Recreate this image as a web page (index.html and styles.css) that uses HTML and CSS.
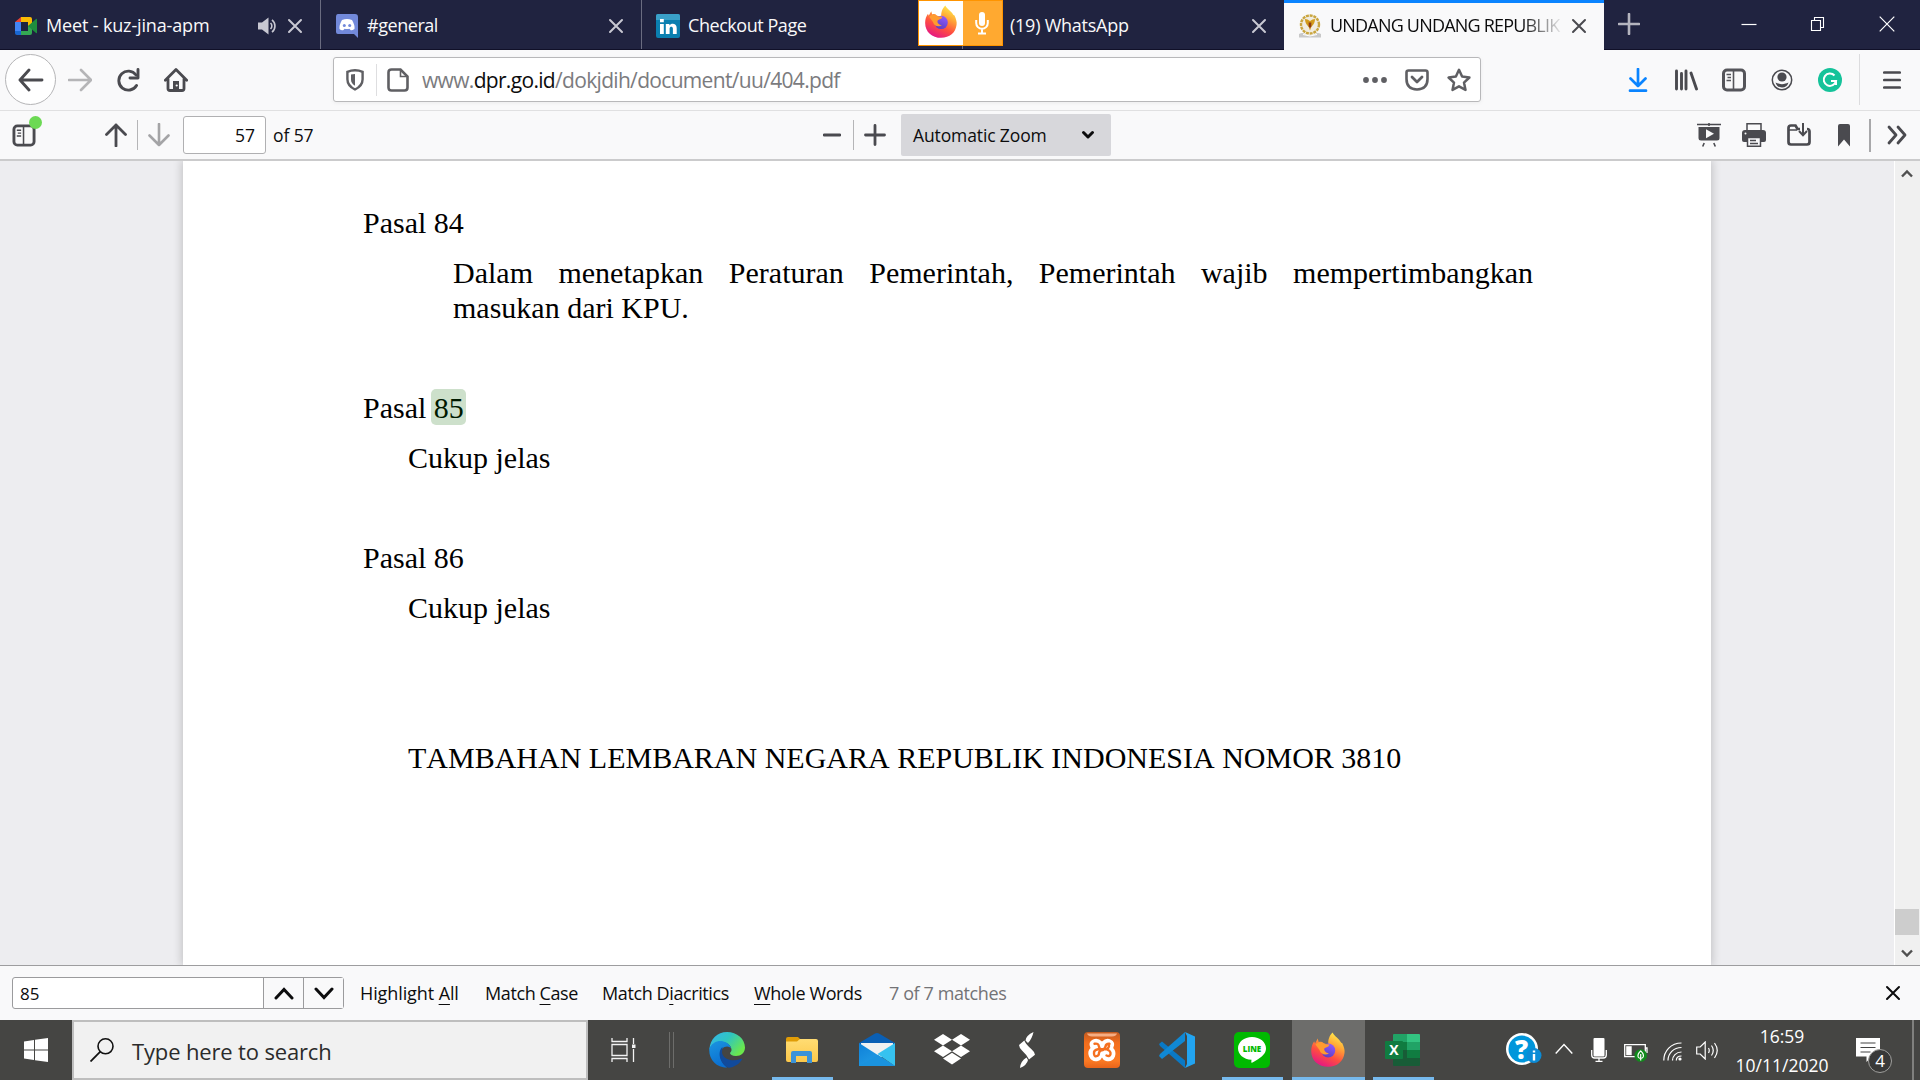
FILE: index.html
```html
<!DOCTYPE html>
<html lang="id">
<head>
<meta charset="utf-8">
<title>UNDANG UNDANG REPUBLIK INDONESIA</title>
<link rel="stylesheet" href="styles.css">
</head>
<body>
<svg width="0" height="0" class="defs">
  <defs>
    <linearGradient id="flame" x1="0.8" y1="0" x2="0.3" y2="1"><stop offset="0" stop-color="#fff44f"/><stop offset="0.35" stop-color="#ffa436"/><stop offset="0.65" stop-color="#ff4f3f"/><stop offset="1" stop-color="#e31587"/></linearGradient>
    <linearGradient id="globe" x1="0.7" y1="0" x2="0.3" y2="1"><stop offset="0" stop-color="#9059ff"/><stop offset="1" stop-color="#5b3fc0"/></linearGradient>
    <linearGradient id="edgeTop" x1="0" y1="0" x2="1" y2="0.6"><stop offset="0" stop-color="#35b4f0"/><stop offset="0.5" stop-color="#2fc5c0"/><stop offset="1" stop-color="#6be84c"/></linearGradient>
    <linearGradient id="edgeBody" x1="0" y1="0" x2="0.4" y2="1"><stop offset="0" stop-color="#1b95e0"/><stop offset="1" stop-color="#0a6ed1"/></linearGradient>
    <linearGradient id="xamppBg" x1="0" y1="0" x2="0" y2="1"><stop offset="0" stop-color="#c05a20"/><stop offset="0.3" stop-color="#f36d1c"/><stop offset="0.8" stop-color="#fb7a24"/><stop offset="1" stop-color="#e8641a"/></linearGradient>
    <linearGradient id="mailBody" x1="0" y1="0" x2="1" y2="1"><stop offset="0" stop-color="#0f80d8"/><stop offset="1" stop-color="#28a8ea"/></linearGradient>
    <linearGradient id="folder" x1="0" y1="0" x2="0" y2="1"><stop offset="0" stop-color="#ffdc73"/><stop offset="1" stop-color="#fcc84a"/></linearGradient>
    <symbol id="close" viewBox="0 0 16 16"><path d="M2 2l12 12M14 2L2 14" fill="none" stroke="currentColor" stroke-width="2" stroke-linecap="round"/></symbol>
    <symbol id="firefox" viewBox="0 0 36 36">
      <path d="M22.500 .500c1 2.600 4.500 4.600 6.800 7.500 1.500 1.800 1.300 2.600 3 3.200C34 15 35 18 34.500 21 33.500 29.500 27 34.800 18.200 34.800 8.500 34.800 1.200 28.500 1.200 19c0-4 1.200-7.300 3-9.800L5 11.500 7.700 6.500l1 3.500c2-.7 3.500-.3 4.800 1L18.500 13C17.500 8.500 19.500 3.500 22.500.500z" fill="url(#flame)"/>
      <circle cx="18.200" cy="18.500" r="7" fill="url(#globe)"/>
      <path d="M5.500 12.500c3-3 6-3 8.500-.5l5.500.5c-.5 2.500-3.500 2.700-5 3.800-.8 1.500.2 4.200 4.500 5.200-4 2.500-8.500.5-9.500-3.500z" fill="#ff9b2e"/>
    </symbol>
    <symbol id="panel" viewBox="0 0 24 24"><rect x="1.500" y="2" width="21" height="20" rx="3.500" fill="none" stroke="currentColor" stroke-width="3"/><path d="M11.500 2v20" stroke="currentColor" stroke-width="1.600"/><path d="M4.500 6.500h4.500M5.500 9.500H9M4.500 12.500H9" stroke="currentColor" stroke-width="1.400"/></symbol>
  </defs>
</svg>

<header class="tabbar">
  <div class="tab">
    <svg class="fav" viewBox="0 0 24 24"><path d="M1 8l6-5v5z" fill="#ea4335"/><path d="M7 3h9q2 0 2 2v5l-4 3V8H7z" fill="#fbbc04"/><path d="M1 8h6v9H1z" fill="#4285f4"/><path d="M1 17h6v4H3q-2 0-2-2z" fill="#1967d2"/><path d="M7 17h7v-5l4-2v9q0 2-2 2H7z" fill="#34a853"/><path d="M14 12l8-7q1-.500 1 .500v13q0 1-1 .500z" fill="#1e8e3e"/></svg>
    <span class="tab-title t-meet">Meet - kuz-jina-apm</span>
    <svg class="speaker" viewBox="0 0 20 18"><path d="M0 5.500h4L10.500.500v17L4 12.500H0z" fill="#c8c8d2"/><path d="M12.500 6a4 4 0 010 6M14 2.800a8 8 0 010 12.400" fill="none" stroke="#c8c8d2" stroke-width="1.600"/></svg>
    <svg class="x"><use href="#close"/></svg>
  </div>
  <div class="tab">
    <svg class="fav" viewBox="0 0 24 24"><path d="M3 0h17q3 0 3 3v21l-4-4H3q-2 0-2-2V3q0-3 2-3z" fill="#7289da"/><path d="M7 6q5-2 10 0 3 5 2.500 9-3 2-4 1l-1-1.200q-2.500.600-5 0L8.500 16q-2 1-4-1Q4 11 7 6z" fill="#fff"/><circle cx="9.300" cy="11.500" r="1.500" fill="#7289da"/><circle cx="14.700" cy="11.500" r="1.500" fill="#7289da"/></svg>
    <span class="tab-title t-general">#general</span>
    <svg class="x"><use href="#close"/></svg>
  </div>
  <div class="tab">
    <svg class="fav" viewBox="0 0 24 24"><rect width="24" height="24" rx="2" fill="#0a7fb0"/><path d="M0 2q0-2 2-2h20q2 0 2 2v4H0z" fill="#3aa0c8"/><path d="M4 10h3.800v10H4zM4 5h3.800v3.200H4zM9.800 10h3.600v1.500c1.800-2.700 7.300-2.400 7.300 2.500v6h-3.800v-5.500c0-2.300-3.300-2.300-3.300 0V20H9.800z" fill="#fff"/></svg>
    <span class="tab-title t-checkout">Checkout Page</span>
  </div>
  <div class="tab tab-wa">
    <span class="tab-title t-wa">(19) WhatsApp</span>
    <svg class="x"><use href="#close"/></svg>
  </div>
  <div class="tab active">
    <svg class="fav" viewBox="0 0 24 24"><circle cx="12" cy="10.500" r="9" fill="#f0ece0" stroke="#c9a53e" stroke-width="2.400" stroke-dasharray="3 .800"/><path d="M12 7q-2.500-2-5-2 0 5 3.500 7.500l1.500 4 1.500-4Q17 10 17 5q-2.500 0-5 2z" fill="#d39b1c"/><path d="M10.700 8.500h2.600v4L12 14l-1.300-1.500z" fill="#8d3a14"/><path d="M1 20q4-2 6 .500 5 1.500 10 0 2-2.500 6-.500v3.500H1z" fill="#c8c8c8"/><path d="M5 20.500q7 3 14 0" fill="none" stroke="#fff"/></svg>
    <span class="tab-title t-active">UNDANG UNDANG REPUBLIK</span>
    <svg class="x"><use href="#close"/></svg>
  </div>
  <svg class="newtab" viewBox="0 0 22 22"><path d="M11 1v20M1 11h20" stroke="#b4b4be" stroke-width="2.600" stroke-linecap="round"/></svg>
  <div class="winctl">
    <svg viewBox="0 0 16 16"><path d="M.5 8.500h15" stroke="#fff" stroke-width="1.200"/></svg>
    <svg viewBox="0 0 16 16"><path d="M1.500 4.500h9v10h-9zM4.500 4.500v-3h9v10h-3" fill="none" stroke="#fff" stroke-width="1.100"/></svg>
    <svg viewBox="0 0 16 16"><path d="M.700.700l14.600 14.600M15.300.700L.700 15.300" stroke="#fff" stroke-width="1.200"/></svg>
  </div>
  <div class="sharing">
    <div class="share-logo"><svg width="34" height="34"><use href="#firefox"/></svg></div>
    <div class="share-mic"><svg width="14" height="23" viewBox="0 0 14 23"><rect x="4" y="0" width="6" height="14" rx="3" fill="#fff"/><path d="M1.200 8v3a5.800 5.800 0 0011.600 0V8M7 17v4M3 21.500h8" fill="none" stroke="#fff" stroke-width="2"/></svg></div>
  </div>
</header>

<nav class="navbar">
  <div class="back"><svg width="26" height="24" viewBox="0 0 26 24"><path d="M24 12H2M11 2L2 12l9 10" fill="none" stroke="#4a4a4f" stroke-width="2.900" stroke-linecap="round" stroke-linejoin="round"/></svg></div>
  <svg class="fwd" viewBox="0 0 24 24"><path d="M1 12h21M13 2l10 10-10 10" fill="none" stroke="#b5b5b7" stroke-width="2.600" stroke-linecap="round" stroke-linejoin="round"/></svg>
  <svg class="reload" viewBox="0 0 24 24"><path d="M20.500 17.500A9.500 9.500 0 1 1 20 7" fill="none" stroke="#4a4a4f" stroke-width="2.900" stroke-linecap="round"/><path d="M22 1.500v8.500h-8" fill="none" stroke="#4a4a4f" stroke-width="2.900" stroke-linecap="round" stroke-linejoin="round"/></svg>
  <svg class="home" viewBox="0 0 24 24"><path d="M1.300 12.300L12 1.500l10.700 10.800M4 11v9.500q0 2 2 2h12q2 0 2-2V11" fill="none" stroke="#4a4a4f" stroke-width="2.800" stroke-linecap="round" stroke-linejoin="round"/><path d="M9 22v-9h6v9z" fill="#4a4a4f"/><circle cx="12.700" cy="17.500" r="1.100" fill="#fff"/></svg>
  <div class="urlbar">
    <svg class="shield" viewBox="0 0 18 22"><path d="M9 1.300q4 0 7.600 1.500v7.400q0 6.500-7.600 10.300-7.600-3.800-7.600-10.300V2.800Q5 1.300 9 1.300z" fill="none" stroke="#5f5f63" stroke-width="2.400"/><path d="M9 5Q7 5 5 5.500v5q0 4 4 6.300z" fill="#5f5f63"/></svg>
    <i class="vline"></i>
    <svg class="doc" viewBox="0 0 22 24"><path d="M4.500 1.500h9l7 7v11q0 3-3 3h-13q-3 0-3-3v-15q0-3 3-3z" fill="none" stroke="#5f5f63" stroke-width="2.600"/><path d="M13.500 2v6.500h6.500" fill="none" stroke="#5f5f63" stroke-width="1.600"/></svg>
    <span class="url">www.<b>dpr.go.id</b>/dokjdih/document/uu/404.pdf</span>
    <svg class="u-ic" viewBox="0 0 24 24"><circle cx="3" cy="12" r="2.900"/><circle cx="12" cy="12" r="2.900"/><circle cx="21" cy="12" r="2.900"/></svg>
    <svg class="u-ic" viewBox="0 0 24 24"><path d="M3.500 2.500h17q2 0 2 2v6.500q0 10-10.500 10.500Q1.500 21 1.500 11V4.500q0-2 2-2z" fill="none" stroke="#5f5f63" stroke-width="2.600"/><path d="M7 9l5 5 5-5" fill="none" stroke="#5f5f63" stroke-width="2.800" stroke-linecap="round" stroke-linejoin="round"/></svg>
    <svg class="u-ic" viewBox="0 0 24 24"><path d="M12 1.800l3.100 6.800 7.300.9-5.400 5.100 1.500 7.300L12 18.300l-6.500 3.600L7 14.600 1.600 9.500l7.300-.9z" fill="none" stroke="#5f5f63" stroke-width="2.500" stroke-linejoin="round"/></svg>
  </div>
  <div class="navtools">
    <svg viewBox="0 0 24 24"><path d="M12 1v17M4.500 10.500L12 18l7.500-7.500M4 22.700h16" fill="none" stroke="#0a84ff" stroke-width="2.700" stroke-linecap="round" stroke-linejoin="round"/></svg>
    <svg viewBox="0 0 24 24"><path d="M2.500 3v18M7.500 5.500V21M12 3v18M17 5l5.500 16" fill="none" stroke="#4a4a4f" stroke-width="2.900" stroke-linecap="round"/></svg>
    <svg class="dim"><use href="#panel"/></svg>
    <svg viewBox="0 0 24 24"><circle cx="12" cy="12" r="9.700" fill="none" stroke="#4a4a4f" stroke-width="1.500"/><circle cx="12" cy="9" r="4.600" fill="#4a4a4f"/><path d="M5.500 14.500q2 1 3 1 3.500 1.500 7 0 1 0 3-1-1.500 5-6.500 5t-6.500-5z" fill="#4a4a4f"/></svg>
    <svg viewBox="0 0 24 24"><circle cx="12" cy="12" r="12" fill="#15c39a"/><path d="M16.500 7.500A6.200 6.200 0 1 0 18 13h-5M18 13v4" fill="none" stroke="#fff" stroke-width="2"/></svg>
  </div>
  <i class="nav-sep"></i>
  <svg class="menu" viewBox="0 0 18 20"><path d="M1.300 2.500h15.400M1.300 10h15.400M1.300 17.500h15.400" stroke="#4a4a4f" stroke-width="2.700" stroke-linecap="round"/></svg>
</nav>

<div class="pdfbar">
  <div class="side-toggle"><svg width="24" height="23"><use href="#panel"/></svg><i class="dot"></i></div>
  <svg class="up" viewBox="0 0 22 24"><path d="M11 23V2M1.500 11.500L11 2l9.500 9.500" fill="none" stroke="#4a4a4f" stroke-width="2.800" stroke-linecap="round" stroke-linejoin="round"/></svg>
  <i class="bar-sep"></i>
  <svg class="down" viewBox="0 0 22 24"><path d="M11 1v21M1.500 12.500L11 22l9.500-9.500" fill="none" stroke="#a4a4a6" stroke-width="2.600" stroke-linecap="round" stroke-linejoin="round"/></svg>
  <div class="pageno">57</div>
  <span class="of">of 57</span>
  <svg class="minus" viewBox="0 0 18 22"><path d="M1 11h16" stroke="#4a4a4f" stroke-width="2.800" stroke-linecap="round"/></svg>
  <i class="bar-sep"></i>
  <svg class="plus" viewBox="0 0 22 22"><path d="M11 1.500v19M1.500 11h19" stroke="#4a4a4f" stroke-width="2.800" stroke-linecap="round"/></svg>
  <div class="zoom"><span>Automatic Zoom</span><svg width="14" height="10" viewBox="0 0 14 10"><path d="M2.500 2.500L7 7l4.500-4.500" fill="none" stroke="#0c0c0d" stroke-width="3" stroke-linecap="round" stroke-linejoin="round"/></svg></div>
  <div class="pdftools">
    <svg viewBox="0 0 24 24"><path d="M0 1.500h24M12 0v3" stroke="#4a4a4f" stroke-width="1.600"/><path d="M1.500 4h21v11q0 2.500-2.500 2.500H4q-2.500 0-2.500-2.500z" fill="#4a4a4f"/><path d="M9 6.200v9l8-4.500z" fill="#f9f9fa"/><path d="M7.200 20l-1.500 3.500M16.800 20l1.500 3.500" stroke="#4a4a4f" stroke-width="1.600"/></svg>
    <svg viewBox="0 0 24 24"><path d="M5 8V.800h14V8" fill="#f9f9fa" stroke="#4a4a4f" stroke-width="1.500"/><path d="M3 7h18q3 0 3 3v7q0 2-2 2H2q-2 0-2-2v-7q0-3 3-3z" fill="#4a4a4f"/><path d="M5.500 14.500h13v8.700h-13z" fill="#f9f9fa" stroke="#4a4a4f" stroke-width="1.500"/><path d="M8 17.500h6M8 20.500h8" stroke="#4a4a4f" stroke-width="1.400"/><circle cx="3.500" cy="10.500" r="1" fill="#f9f9fa"/></svg>
    <svg viewBox="0 0 24 24"><path d="M13 6h-2.500L8.500 2.500H4q-2.500 0-2.500 2.500v14Q1.500 21.500 4 21.500h16q2.500 0 2.500-2.500V8.500Q22.500 6 20 6" fill="none" stroke="#4a4a4f" stroke-width="2.700"/><path d="M2 7h8" stroke="#4a4a4f" stroke-width="1.500"/><path d="M16 0v11.500M12 8l4 4.200L20 8" fill="none" stroke="#4a4a4f" stroke-width="2"/></svg>
    <svg viewBox="0 0 24 24"><path d="M6 3q0-2 2-2h8q2 0 2 2v20.500l-6-7-6 7z" fill="#4a4a4f"/></svg>
  </div>
  <i class="tool-sep"></i>
  <svg class="more" viewBox="0 0 20 20"><path d="M2 2l7 8-7 8M11 2l7 8-7 8" fill="none" stroke="#4a4a4f" stroke-width="2.800" stroke-linecap="round" stroke-linejoin="round"/></svg>
</div>

<main class="viewer">
  <article class="page">
    <h2 class="pasal">Pasal 84</h2>
    <p class="body"><span class="just">Dalam menetapkan Peraturan Pemerintah, Pemerintah wajib mempertimbangkan</span>masukan dari KPU.</p>
    <h2 class="pasal p85">Pasal <mark>85</mark></h2>
    <p class="clear">Cukup jelas</p>
    <h2 class="pasal p86">Pasal 86</h2>
    <p class="clear">Cukup jelas</p>
    <p class="closing">TAMBAHAN LEMBARAN NEGARA REPUBLIK INDONESIA NOMOR 3810</p>
  </article>
  <div class="scroll">
    <svg width="12" height="9" viewBox="0 0 12 9"><path d="M1 7.500l5-5 5 5" fill="none" stroke="#505050" stroke-width="2.400"/></svg>
    <i class="thumb"></i>
    <svg width="12" height="9" viewBox="0 0 12 9"><path d="M1 1.500l5 5 5-5" fill="none" stroke="#505050" stroke-width="2.400"/></svg>
  </div>
</main>

<section class="findbar">
  <div class="findbox">
    <span class="query">85</span>
    <span class="fbtn"><svg width="20" height="13" viewBox="0 0 20 13"><path d="M2 11l8-8.500 8 8.500" fill="none" stroke="#0c0c0d" stroke-width="3" stroke-linecap="round"/></svg></span>
    <span class="fbtn"><svg width="20" height="13" viewBox="0 0 20 13"><path d="M2 2l8 8.500L18 2" fill="none" stroke="#0c0c0d" stroke-width="3" stroke-linecap="round"/></svg></span>
  </div>
  <span class="opt o1">Highlight <u>A</u>ll</span>
  <span class="opt o2">Match <u>C</u>ase</span>
  <span class="opt o3">Match D<u>i</u>acritics</span>
  <span class="opt o4"><u>W</u>hole Words</span>
  <span class="opt o5">7 of 7 matches</span>
  <svg class="x fclose"><use href="#close"/></svg>
</section>

<footer class="taskbar">
  <div class="start"><svg width="24" height="24" viewBox="0 0 24 24"><path d="M0 3.400l10-1.400v9.500H0zM11 1.800L24 0v11.500H11zM0 12.500h10V22L0 20.600zM11 12.500h13V24l-13-1.800z" fill="#fff"/></svg></div>
  <div class="search">
    <svg width="24" height="24" viewBox="0 0 24 24"><circle cx="15.500" cy="8.300" r="7.500" fill="none" stroke="#111" stroke-width="1.600"/><path d="M10.300 13.700L.500 23.500" stroke="#111" stroke-width="1.800"/></svg>
    <span>Type here to search</span>
  </div>
  <svg class="taskview" viewBox="0 0 26 24"><path d="M1 0v3.500h15V0M1 24v-3.500h15V24M1 6.500h15v11H1zM22.500 0v6M22.500 11v13" fill="none" stroke="#f2f2f2" stroke-width="1.300"/><path d="M21 6.500h3.500v3.500H21z" fill="#f2f2f2"/></svg>
  <div class="grip"></div>
  <div class="apps">
    <div class="app"><svg viewBox="0 0 36 36"><path d="M.500 17C1 7 8.500 0 18 0c10 0 18 7 18 15.500 0 5-4 8.500-9 8.500-4 0-6-1.500-6-3 1.500-1.500 2-3 1-5.500C20 10 10 8 4 12.500z" fill="url(#edgeTop)"/><path d="M.300 16.500C3 10.500 9 8 14.500 9.500c4 1 7 3.500 7.500 7-1.500-2.500-6-3-9 .500-3.500 4-2 12.500 5 18.700C7 35.500-.500 27.500.300 16.500z" fill="url(#edgeBody)"/><path d="M13.500 15c-6 5-2 18 6 20.700 6-.200 11-4 13.500-8.200.500-1-.500-1-1.500-.600C24 30 15 28 13 21z" fill="#114a9b"/></svg></div>
    <div class="app open"><svg viewBox="0 0 36 36"><path d="M2 7q0-2 2-2h10l3 3v4H2z" fill="#e09c06"/><path d="M2 9.500h11l3-2.500h16q2 0 2 2v19q0 2-2 2H4q-2 0-2-2z" fill="url(#folder)"/><path d="M7 31V21q0-2 2-2h17q2 0 2 2v10h-5v-7H12v7z" fill="#3b93d8"/></svg></div>
    <div class="app"><svg viewBox="0 0 36 36"><path d="M0 11L16 1.500q2-1 4 0L36 11v4H0z" fill="#0a5fb4"/><path d="M2 11h32v14H2z" fill="#f1f1f1"/><path d="M0 11l36 23H0z" fill="url(#mailBody)"/><path d="M36 11v23L18.500 22z" fill="#36c2f0"/><path d="M0 34h36L19 23z" fill="#1a93df"/></svg></div>
    <div class="app"><svg viewBox="0 0 36 36"><path d="M9 2l9 5.700-9 5.700L0 7.700zM27 2l9 5.700-9 5.700-9-5.700zM9 13.500l9 5.700-9 5.700-9-5.700zM27 13.500l9 5.700-9 5.700-9-5.700zM9 26.500l9-5.700 9 5.700-9 5.900z" fill="#fff"/></svg></div>
    <div class="app"><svg viewBox="0 0 36 36"><path d="M24.500 0Q17 3.500 16.500 8.500L19 11Q23 7 24.500 0zM15.300 8.500L10 13q.300 3 3 5.500 5 4.500 7 9L26 22.800q-.500-3-3.500-5.500Q17 12.500 15.300 8.500zM17.500 25.500Q11.500 29 11 36q7-3 8-8z" fill="#fff"/></svg></div>
    <div class="app"><svg viewBox="0 0 36 36"><rect width="36" height="36" rx="4" fill="url(#xamppBg)"/><path d="M3 1.500h30q-1 3-5 3H8q-4 0-5-3z" fill="#f5ae84"/><path d="M18 9.500Q14 5.500 9 7.500 3.500 10 6.500 16 3 19 5 24.500 8 30.500 14 29q3-1 4-3.500 1 2.500 4 3.500 6.500 1.500 9-4.500 1.500-5.500-1.800-8.500 3-6-2.700-8.500Q22 5.500 18 9.500z" fill="#fff"/><path d="M10.500 11.800q4-.800 4.300 2.200t3.200 3.500q3 0 3.500-3t4-2.700M24 12q2.500 2-1 5.300h-9q-4.500.700-4 4.500t3.500 2q1.500-.500 1.500-3 .500-2.800 4-2.800M23 17.500q4 1.500 3.500 4.500t-4 1.500" fill="none" stroke="#f57020" stroke-width="2.400" stroke-linecap="round"/></svg></div>
    <div class="app"><svg viewBox="0 0 36 36"><path d="M0 12l3-2.500 23 19V36L1 14z" fill="#0a79c5"/><path d="M0 24l3 3L26 9V0L1 22z" fill="#1088d4"/><path d="M26 0l10 4.500v27L26 36l2-4V4z" fill="#22a4f1"/></svg></div>
    <div class="app open"><svg viewBox="0 0 36 36"><rect width="36" height="36" rx="5" fill="#00b900"/><path d="M18 5c8 0 14 5 14 11.300 0 4-2 7-8 11-3 2-5 3-6 3.500-1 .300-.700-1-.500-3C9.500 27.500 4 22.500 4 16.300 4 10 10 5 18 5z" fill="#fff"/><text x="18" y="19.700" text-anchor="middle" class="line-word">LINE</text></svg></div>
    <div class="app open current"><svg viewBox="0 0 36 36"><use href="#firefox"/></svg></div>
    <div class="app open"><svg viewBox="0 0 36 36"><path d="M8 3q0-1 1-1h13v8H8z" fill="#21a366"/><path d="M22 2h12q1 0 1 1v7H22z" fill="#33c481"/><path d="M8 10h14v8H8z" fill="#107c41"/><path d="M22 10h13v8H22z" fill="#21a366"/><path d="M8 18h27v15q0 1-1 1H9q-1 0-1-1z" fill="#185c37"/><path d="M22 18h13v8H22z" fill="#107c41"/><rect y="9" width="18" height="18" rx="1" fill="#107c41"/><text x="9" y="22.500" text-anchor="middle" class="x-letter">X</text></svg></div>
  </div>
  <div class="tray">
    <svg class="help" viewBox="0 0 36 34"><circle cx="16" cy="16" r="16" fill="#fff"/><circle cx="16" cy="16" r="13.500" fill="#0096db"/><text x="15.500" y="25.500" text-anchor="middle" class="q-mark">?</text><circle cx="28" cy="22.500" r="7.500" fill="#0b8bd6"/><path d="M28 21v6.500M28 17.500v2" stroke="#fff" stroke-width="2.400"/></svg>
    <svg class="chev" viewBox="0 0 18 12"><path d="M.700 10.500L9 1.500l8.300 9" fill="none" stroke="#fff" stroke-width="1.400"/></svg>
    <svg class="mic" viewBox="0 0 16 24"><rect x="2.500" width="11" height="18.500" rx="1" fill="#fff"/><path d="M.700 12v5q0 3 3 3h8.600q3 0 3-3v-5M8 20v3.500M4.500 23.400h7" fill="none" stroke="#fff" stroke-width="1.300"/></svg>
    <svg class="batt" viewBox="0 0 24 19"><path d="M.700 1.700h20.600v12H.700zM21.500 5h1.500v5" fill="none" stroke="#fff" stroke-width="1.300"/><path d="M2.200 3.200h5.500v9H2.200z" fill="#fff"/><circle cx="16.700" cy="12.500" r="6.300" fill="#118a1c"/><path d="M16.700 8q3.500 3 2.500 6-1 1.500-2.500 1.500t-2.500-1.500q-1-3 2.500-6zM16.700 11v6.500" fill="none" stroke="#fff" stroke-width="1.200"/></svg>
    <svg class="wifi" viewBox="0 0 19 19"><g fill="none" stroke="#fff" stroke-width="1.200"><path d="M.800 18.500C.800 9 8 1 18.500 1"/><path d="M5 18.500C5 11.500 10.500 5.500 18.500 5.500" /><path d="M9.500 18.500C9.500 14 13 10 18.500 10"/><path d="M13.300 18.500q0-4.500 5.200-4.500" /></g><circle cx="17" cy="17" r="1.600" fill="#fff"/></svg>
    <svg class="vol" viewBox="0 0 23 19"><path d="M.700 6h3.500l5-5v17l-5-5H.700zM12.500 7q1.500 2.500 0 5M15.500 4.500q3.500 5 0 10M18.500 2q5.500 7.500 0 15" fill="none" stroke="#fff" stroke-width="1.200"/></svg>
    <div class="clock"><span class="time">16:59</span><span class="date">10/11/2020</span></div>
    <div class="notif"><svg width="24" height="24" viewBox="0 0 24 24"><path d="M0 0h24v18.500h-8.500L10.500 24v-5.500H0z" fill="#fff"/><path d="M4.500 5h15M4.500 9.500h15M4.500 14h10" stroke="#444" stroke-width="1.200"/></svg><span class="badge">4</span></div>
    <i class="desk"></i>
  </div>
</footer>
</body>
</html>
```
FILE: styles.css
```css
* { box-sizing: border-box; }
html, body { margin: 0; height: 100%; overflow: hidden; }
body {
  width: 1920px; height: 1080px;
  display: flex; flex-direction: column;
  font-family: "Open Sans", "Noto Sans", sans-serif;
  font-size: 18px; color: #0c0c0d; background: #f9f9fa;
}
svg { display: block; flex: none; }
i { display: block; flex: none; }
.defs { position: absolute; }
span { white-space: nowrap; }

/* Tabs */
.tabbar {
  position: relative; flex: none; height: 50px;
  display: flex; background: #202340; border-bottom: 1px solid #101028;
}
.tab {
  flex: none; width: 321px; display: flex; align-items: center;
  padding: 2px 17px 0 14px; border-right: 1px solid #6a6c80; color: #f9f9fa;
}
.fav { width: 24px; height: 24px; margin-right: 8px; }
.tab-title { flex: 1; padding-bottom: 1px; }
.t-meet { letter-spacing: -0.15px; }
.t-general, .t-checkout { letter-spacing: -0.45px; }
.t-wa { letter-spacing: -0.25px; }
.speaker { width: 20px; height: 18px; margin-right: 9px; }
.x { width: 16px; height: 16px; color: #c8c8d2; }
.tab-wa { padding-left: 47px; border: 0; }
.tab.active {
  width: 320px; height: 50px; background: #f9f9fa; color: #0c0c0d; border: 0;
  border-top: 3px solid #0a84ff; padding: 0 17px 2px 14px;
}
.active .fav { margin-right: 8px; }
.active .x { color: #4a4a4f; }
.t-active {
  overflow: hidden; letter-spacing: -0.8px; margin-right: 7px;
  mask-image: linear-gradient(to right, #000 82%, transparent 100%);
}
.newtab { width: 22px; height: 22px; margin: 13px 0 0 14px; }
.winctl { display: flex; margin: 16px 0 0 101px; gap: 53px; }
.winctl svg { width: 16px; height: 16px; }
.sharing {
  position: absolute; left: 918px; top: 0; width: 85px; height: 46px;
  display: flex; border: 1px solid #ff9400; background: #ffa930;
}
.share-logo { width: 44px; background: #fff; padding: 4px 5px; }
.share-mic { flex: 1; display: flex; align-items: center; justify-content: center; padding-right: 2px; }

/* Navigation */
.navbar {
  flex: none; height: 61px; display: flex; align-items: center;
  padding-bottom: 1px; border-bottom: 1px solid #e0e0e1;
}
.back {
  width: 51px; height: 51px; margin-left: 5px; border-radius: 50%;
  border: 1px solid #b5b5b7; background: #fff;
  display: flex; align-items: center; justify-content: center;
}
.fwd, .reload, .home { width: 24px; height: 24px; }
.fwd { margin-left: 12px; }
.reload { margin-left: 24px; }
.home { margin-left: 24px; }
.urlbar {
  width: 1148px; height: 45px; margin-left: 145px; padding: 0 9px 0 12px;
  display: flex; align-items: center; background: #fff;
  border: 1px solid #b8b8ba; border-radius: 3px; box-shadow: 0 1px 4px rgba(0,0,0,.06);
}
.shield { width: 18px; height: 22px; }
.vline { width: 1px; height: 32px; background: #dedee0; margin: 0 10px 0 12px; }
.doc { width: 22px; height: 24px; }
.url { flex: 1; margin-left: 13px; font-size: 21px; color: #7b7b7e; letter-spacing: -0.68px; }
.url b { font-weight: 400; color: #0c0c0d; }
.u-ic { width: 24px; height: 24px; margin-left: 18px; fill: #5f5f63; }
.navtools { display: flex; gap: 24px; margin-left: 145px; }
.navtools svg { width: 24px; height: 24px; }
.dim { color: #55555a; }
.nav-sep { width: 1px; height: 51px; margin-left: 17px; background: #dcdcde; }
.menu { width: 18px; height: 20px; margin-left: 23px; }

/* Document toolbar */
.pdfbar {
  flex: none; height: 50px; display: flex; align-items: center;
  border-bottom: 2px solid #cbcbcc;
}
.side-toggle { position: relative; margin-left: 12px; color: #4a4a4f; }
.dot {
  position: absolute; left: 17px; top: -8px; width: 13px; height: 13px;
  border-radius: 50%; background: #6cd954;
}
.up, .down { width: 22px; height: 24px; }
.up { margin-left: 69px; }
.bar-sep { width: 1px; height: 30px; background: #b5b5b7; }
.up + .bar-sep { margin-left: 10px; }
.down { margin-left: 10px; }
.pageno {
  width: 83px; height: 38px; margin-left: 13px; padding: 0 10px 0 0;
  border: 1px solid #b0b0b2; border-radius: 3px; background: #fff;
  font-size: 17.5px; line-height: 36px; text-align: right;
}
.of { width: 40px; margin-left: 7px; font-size: 17.5px; letter-spacing: -0.1px; }
.minus { width: 18px; height: 22px; margin-left: 510px; }
.minus + .bar-sep { margin-left: 12px; }
.plus { width: 22px; height: 22px; margin-left: 10px; }
.zoom {
  width: 210px; height: 42px; margin-left: 15px; padding: 0 16px 0 12px;
  display: flex; align-items: center; justify-content: space-between;
  background: #d7d7db; border-radius: 2px; font-size: 17.5px; letter-spacing: -0.12px;
}
.zoom span { padding-bottom: 1px; }
.pdftools { display: flex; gap: 21px; margin-left: 586px; }
.pdftools svg { width: 24px; height: 24px; }
.tool-sep { width: 2px; height: 33px; margin-left: 13px; background: #a8a8aa; }
.more { width: 20px; height: 20px; margin-left: 16px; }

/* Document */
.viewer { flex: 1; min-height: 0; display: flex; background: #ededf0; overflow: hidden; }
.page {
  width: 1528px; margin-left: 183px; padding: 44px 178px 0 180px; background: #fff;
  box-shadow: 0 0 9px 1px rgba(0,0,0,.2);
  font-family: "Liberation Serif", "Times New Roman", serif;
  font-size: 30px; line-height: 35px; color: #000;
}
.page h2, .page p { margin: 0; font-size: 30px; font-weight: 400; height: 35px; }
.page .body { height: 70px; margin: 15px 0 0 90px; }
.just { display: block; text-align: justify; text-align-last: justify; }
.page .p85 { margin-top: 65px; }
.page .p86 { margin-top: 65px; }
.page .clear { margin: 15px 0 0 45px; }
.page .closing { margin: 115px 0 0 45px; font-kerning: none; }
mark {
  color: #001a00; background: #cde0cb; border-radius: 5px;
  padding: 2px 2px 1px 3px; margin: 0 -2px 0 -3px;
}
.scroll {
  width: 26px; margin-left: auto; padding: 8px 1px 7px 0; background: #f0f0f0;
  border-left: 1px solid #fff;
  display: flex; flex-direction: column; align-items: center;
}
.thumb { width: 24px; height: 26px; background: #cdcdcd; margin: auto 0 14px; }

/* Find bar */
.findbar {
  flex: none; height: 55px; display: flex; align-items: center;
  border-top: 1px solid #9d9d9f; background: #f9f9fa;
}
.findbox {
  width: 332px; height: 32px; margin-left: 12px; display: flex;
  border: 1px solid #9b9b9d; border-radius: 3px; background: #fff;
}
.query { flex: 1; padding-left: 7px; line-height: 31px; font-size: 17px; }
.fbtn {
  width: 40px; display: flex; align-items: center; justify-content: center;
  border-left: 1px solid #9b9b9d; background: #f9f9fa;
}
.opt { letter-spacing: -0.4px; }
.opt u { text-underline-offset: 4px; text-decoration-thickness: 1px; }
.o1 { width: 125px; margin-left: 16px; letter-spacing: -0.1px; }
.o2 { width: 117px; }
.o3 { width: 152px; }
.o4 { width: 135px; }
.o5 { color: #737376; }
.fclose { color: #0c0c0d; margin: 0 19px 0 auto; }

/* Taskbar */
.taskbar { flex: none; height: 60px; display: flex; background: #454543; }
.start { width: 72px; display: flex; align-items: center; justify-content: center; }
.search {
  width: 516px; display: flex; align-items: center; padding-left: 16px; gap: 18px;
  background: #f1f1f1; border: 2px solid #bebebe; font-size: 22px; color: #2b2b2b;
  letter-spacing: -0.15px;
}
.search span { padding-top: 1px; }
.taskview { width: 26px; height: 24px; margin: 18px 0 0 23px; }
.grip { width: 5px; height: 36px; margin: 12px 16px 0 32px; border: solid #6d6d6b; border-width: 0 1px; }
.apps { display: flex; width: 751px; }
.app { width: 75px; padding-top: 12px; display: flex; flex-direction: column; align-items: center; }
.app svg { width: 36px; height: 36px; margin-left: -1px; }
.open::after { content: ""; width: 61px; height: 3px; margin-top: 9px; background: #76b9ed; }
.current { background: #6d6d6b; width: 73px; margin: 0 1px 0 2px; }
.current::after { width: 73px; }
.line-word { font: 800 8px "Open Sans", sans-serif; fill: #00b900; }
.x-letter { font: 700 14px "Open Sans", sans-serif; fill: #fff; }
.q-mark { font: 800 26px "Open Sans", sans-serif; fill: #fff; }
.tray { flex: 1; display: flex; align-items: center; color: #fff; }
.help { width: 36px; height: 34px; margin-left: 65px; }
.chev { width: 18px; height: 12px; margin: 0 0 3px 13px; }
.mic { width: 16px; height: 24px; margin-left: 18px; }
.batt { width: 24px; height: 19px; margin: 4px 0 0 17px; }
.wifi { width: 19px; height: 19px; margin: 3px 0 0 15px; }
.vol { width: 23px; height: 19px; margin-left: 14px; }
.clock {
  width: 100px; margin-left: 13px; display: flex; flex-direction: column;
  align-items: center; font-size: 17.5px; line-height: 28px;
}
.date { padding-top: 1px; }
.notif { position: relative; margin-left: 24px; }
.badge {
  position: absolute; left: 12px; top: 11px; width: 24px; height: 24px;
  border: 1px solid #a0a09e; border-radius: 50%; background: #393938;
  font-size: 17px; line-height: 22px; text-align: center;
}
.desk { width: 2px; height: 60px; margin: 0 6px 0 auto; background: #80807e; }
```
